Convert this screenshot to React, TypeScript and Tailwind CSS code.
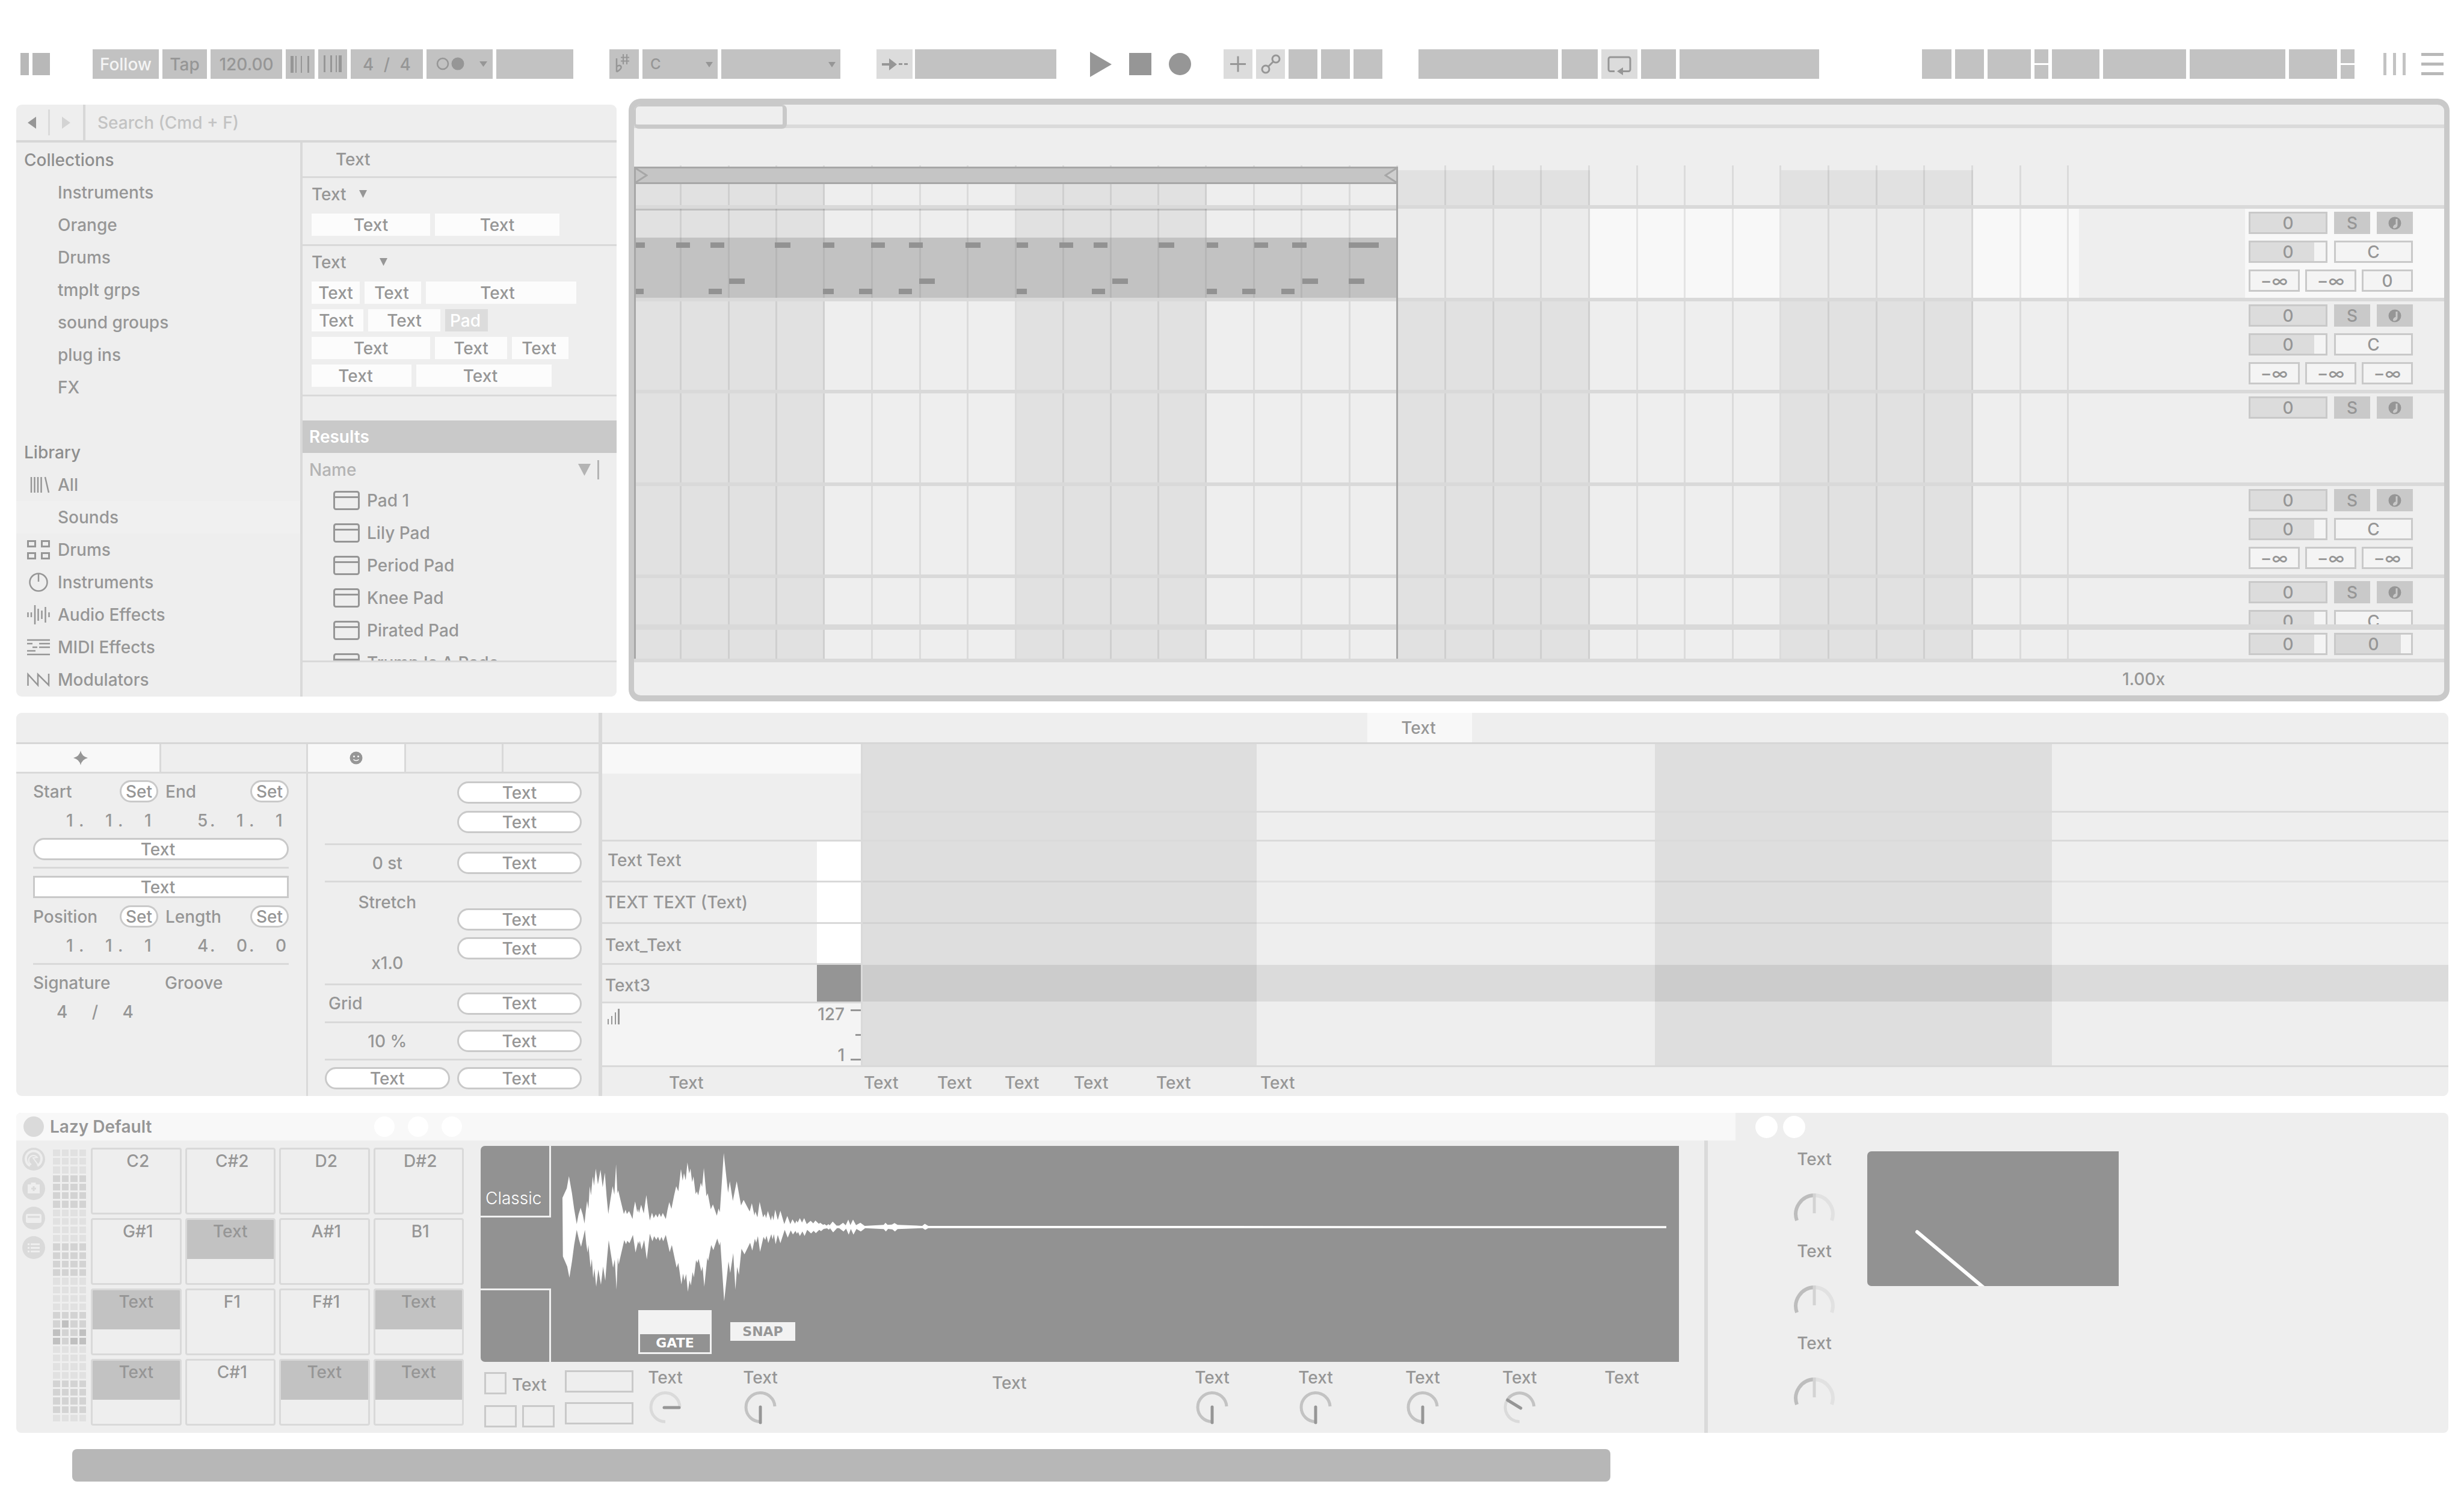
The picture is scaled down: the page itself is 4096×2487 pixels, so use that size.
import React from "react";

/* ------------------------------------------------------------------ */
/* Shared pieces                                                       */
/* ------------------------------------------------------------------ */

function Down({ className = "" }: { className?: string }) {
  return (
    <svg viewBox="0 0 14 12" preserveAspectRatio="none" className={className} aria-hidden="true">
      <path d="M0 0H14L7 12Z" fill="currentColor" />
    </svg>
  );
}

function Pill({ children, className = "" }: { children: React.ReactNode; className?: string }) {
  return (
    <button
      className={
        "flex h-[37px] items-center justify-center rounded-full border-[3px] border-[#c9c9c9] bg-white " + className
      }
    >
      {children}
    </button>
  );
}

/* ------------------------------------------------------------------ */
/* Toolbar                                                             */
/* ------------------------------------------------------------------ */

function Cell({
  w,
  light = false,
  label,
  children,
}: {
  w: string;
  light?: boolean;
  label: string;
  children?: React.ReactNode;
}) {
  return (
    <button
      aria-label={label}
      className={
        "flex h-[49px] shrink-0 items-center justify-center " + (light ? "bg-[#dcdcdc] " : "bg-[#c2c2c2] ") + w
      }
    >
      {children}
    </button>
  );
}

function SplitCell({ label }: { label: string }) {
  return (
    <div className="flex h-[49px] w-[23px] flex-col gap-[3px]">
      <button aria-label={label + " in"} className="flex-1 bg-[#c2c2c2]" />
      <button aria-label={label + " out"} className="flex-1 bg-[#c2c2c2]" />
    </div>
  );
}

function Toolbar() {
  return (
    <header className="flex h-[164px] items-start pt-[82px] pr-[34px] pl-[34px]">
      <button aria-label="Toggle browser" className="flex h-[49px] w-[49px] items-center gap-[6px]">
        <span className="h-[37px] w-[14px] bg-[#b8b8b8]" />
        <span className="h-[37px] w-[29px] bg-[#b8b8b8]" />
      </button>

      <div className="ml-[71px] flex gap-[6px]">
        <Cell w="w-[110px]" label="Follow">
          <span className="text-[#f4f4f4]">Follow</span>
        </Cell>
        <Cell w="w-[74px]" label="Tap tempo">
          Tap
        </Cell>
        <Cell w="w-[119px]" label="Tempo">
          120.00
        </Cell>
        <Cell w="w-[48px]" label="Nudge down">
          <svg viewBox="0 0 48 49" className="h-[49px] w-[48px]" fill="currentColor">
            <path d="M8 11h5v28H8zM16 11h2v28h-2zM25 11h2v28h-2zM36 11h3v28h-3z" />
          </svg>
        </Cell>
        <Cell w="w-[48px]" label="Nudge up">
          <svg viewBox="0 0 48 49" className="h-[49px] w-[48px]" fill="currentColor">
            <path d="M9 10h3v28H9zM20 10h3v28h-3zM29 10h2v28h-2zM34 10h5v28h-5z" />
          </svg>
        </Cell>
        <Cell w="w-[120px]" label="Time signature">
          <span className="flex w-[80px] justify-between">
            <span>4</span>
            <span>/</span>
            <span>4</span>
          </span>
        </Cell>
        <Cell w="w-[110px]" label="Metronome">
          <svg viewBox="0 0 110 49" className="h-[49px] w-[110px]">
            <circle cx="27" cy="24" r="9" fill="none" stroke="currentColor" strokeWidth="2.5" />
            <circle cx="52" cy="24" r="10.500" fill="currentColor" />
            <path d="M88 20h13l-6.500 9z" fill="currentColor" />
          </svg>
        </Cell>
        <Cell w="w-[128px]" label="Quantization" />
      </div>

      <div className="ml-[60px] flex gap-[6px]">
        <Cell w="w-[49px]" label="Scale mode">
          <svg viewBox="0 0 49 49" className="h-[49px] w-[49px]" fill="none" stroke="currentColor" strokeWidth="2.500">
            <path d="M12 15v22.500M12 29c4-4 8-2 7.500 1.500-0.500 3-4 5-7.500 7" />
            <path d="M23 8v17M29 8v17M19 13.500h14M19 19.500h14" strokeWidth="2" />
          </svg>
        </Cell>
        <div className="relative">
          <select
            aria-label="Root note"
            className="h-[49px] w-[125px] appearance-none bg-[#c2c2c2] pl-[13px] text-2xl"
          >
            <option>C</option>
          </select>
          <Down className="pointer-events-none absolute top-[21px] right-[8px] h-[9px] w-[12px]" />
        </div>
        <div className="relative">
          <select aria-label="Scale name" className="h-[49px] w-[198px] appearance-none bg-[#c2c2c2]">
            <option></option>
          </select>
          <Down className="pointer-events-none absolute top-[21px] right-[8px] h-[9px] w-[12px]" />
        </div>
      </div>

      <div className="ml-[60px] flex gap-[4px]">
        <Cell w="w-[60px]" light label="Arrangement follow">
          <svg viewBox="0 0 60 49" className="h-[49px] w-[60px]" fill="currentColor">
            <path d="M9 23h12v-8l13 10-13 10v-8H9zM37 23h6v3h-6zM46 23h6v3h-6z" />
          </svg>
        </Cell>
        <Cell w="w-[235px]" label="Position" />
      </div>

      <div className="ml-[56px] flex h-[49px] items-center gap-[29px]">
        <button aria-label="Play">
          <svg viewBox="0 0 36 42" className="h-[42px] w-[36px]">
            <path d="M0 0L36 21L0 42Z" fill="#969696" />
          </svg>
        </button>
        <button aria-label="Stop" className="h-[37px] w-[37px] bg-[#969696]" />
        <button aria-label="Record" className="h-[37px] w-[37px] rounded-full bg-[#969696]" />
      </div>

      <div className="ml-[54px] flex gap-[6px]">
        <Cell w="w-[48px]" light label="Overdub">
          <svg viewBox="0 0 48 49" className="h-[49px] w-[48px]" stroke="currentColor" strokeWidth="3">
            <path d="M11 24.500h26M24 11.500v26" />
          </svg>
        </Cell>
        <Cell w="w-[48px]" light label="Automation arm">
          <svg viewBox="0 0 48 49" className="h-[49px] w-[48px]" fill="none" stroke="currentColor" strokeWidth="3">
            <circle cx="33" cy="16" r="6" />
            <circle cx="16" cy="33" r="6" />
            <path d="M20.500 28.500L28.500 20.500" />
          </svg>
        </Cell>
        <Cell w="w-[48px]" label="Re-enable automation" />
        <Cell w="w-[48px]" label="Capture" />
        <Cell w="w-[48px]" label="Session record" />
      </div>

      <div className="ml-[60px] flex gap-[6px]">
        <Cell w="w-[232px]" label="Loop start" />
        <Cell w="w-[60px]" label="Punch in" />
        <Cell w="w-[60px]" light label="Loop">
          <svg viewBox="0 0 60 49" className="h-[49px] w-[60px]" fill="none" stroke="currentColor" strokeWidth="3">
            <path d="M22 36.500h-7a3 3 0 0 1-3-3V16a3 3 0 0 1 3-3h30a3 3 0 0 1 3 3v17.500a3 3 0 0 1-3 3h-10" />
            <path d="M36 30v13l-10-6.500z" fill="currentColor" stroke="none" />
          </svg>
        </Cell>
        <Cell w="w-[58px]" label="Punch out" />
        <Cell w="w-[232px]" label="Loop length" />
      </div>

      <div className="ml-auto flex gap-[6px]">
        <Cell w="w-[49px]" label="Draw mode" />
        <Cell w="w-[48px]" label="Computer keyboard" />
        <Cell w="w-[72px]" label="Key map" />
        <SplitCell label="Key" />
        <Cell w="w-[79px]" label="MIDI map" />
        <Cell w="w-[138px]" label="Sample rate" />
        <Cell w="w-[159px]" label="Audio engine" />
        <Cell w="w-[80px]" label="CPU" />
        <SplitCell label="MIDI" />
      </div>
      <button aria-label="Mixer" className="ml-[48px] flex h-[49px] w-[37px] items-center justify-between">
        <span className="h-[37px] w-[5px] bg-[#c3c3c3]" />
        <span className="h-[37px] w-[5px] bg-[#c3c3c3]" />
        <span className="h-[37px] w-[5px] bg-[#c3c3c3]" />
      </button>
      <button aria-label="Menu" className="ml-[26px] flex h-[49px] w-[37px] flex-col justify-between py-[6px]">
        <span className="h-[5px] w-full bg-[#b8b8b8]" />
        <span className="h-[5px] w-full bg-[#b8b8b8]" />
        <span className="h-[5px] w-full bg-[#b8b8b8]" />
      </button>
    </header>
  );
}

/* ------------------------------------------------------------------ */
/* Browser                                                             */
/* ------------------------------------------------------------------ */

const sideIcons: Record<string, React.ReactNode> = {
  All: <path d="M7 3v26M12.500 3v26M18 3v26M23.500 3v26M30 3l6 26" strokeWidth="2.500" />,
  Drums: (
    <path d="M1.500 1.500h12v9h-12zM24.500 1.500h12v9h-12zM1.500 21.500h12v9h-12zM24.500 21.500h12v9h-12z" strokeWidth="3" />
  ),
  Instruments: (
    <>
      <circle cx="19" cy="16" r="14.500" strokeWidth="2.500" />
      <path d="M19 2v13" strokeWidth="2.500" />
    </>
  ),
  "Audio Effects": (
    <path
      d="M1.500 12v8M7 12v8M13 0v32M18.500 6v20M24.500 9v14M30.500 3v26M36.500 12v8"
      strokeWidth="2.500"
    />
  ),
  "MIDI Effects": (
    <path d="M0 4h38M0 10h9M20 10h18M9 16h8M20 16h18M0 22h14M0 28h38" strokeWidth="2.500" />
  ),
  Modulators: <path d="M1.500 26V7L18 25V7L36 25V6" strokeWidth="2.500" />,
};

function SideRow({ label, icon }: { label: string; icon?: React.ReactNode }) {
  return (
    <li>
      <button
        className={
          "flex h-[54px] w-full items-center gap-[13px] pl-[18px] text-left " +
          (label === "Sounds" ? "bg-[#f0f0f0]" : "")
        }
      >
        <svg viewBox="0 0 38 32" className="h-[32px] w-[38px]" fill="none" stroke="currentColor">
          {icon}
        </svg>
        {label}
      </button>
    </li>
  );
}

function Tag({ w, on = false, children }: { w: string; on?: boolean; children: React.ReactNode }) {
  return (
    <button
      className={
        "flex h-[37px] items-center justify-center " + (on ? "bg-[#dcdcdc] text-white " : "bg-[#fcfcfc] ") + w
      }
    >
      {children}
    </button>
  );
}

const results = ["Pad 1", "Lily Pad", "Period Pad", "Knee Pad", "Pirated Pad", "Trump Is A Pado"];

function Browser() {
  return (
    <section aria-label="Browser" className="mt-[10px] flex w-[998px] shrink-0 flex-col overflow-hidden rounded-[9px] bg-[#eeeeee]">
      <div className="flex h-[63px] items-stretch border-b-4 border-[#d7d7d7]">
        <div className="flex w-[115px] items-center justify-between border-r-4 border-[#d7d7d7] py-[8px] pl-[19px]">
          <button aria-label="Back">
            <svg viewBox="0 0 14 20" className="h-[20px] w-[14px]">
              <path d="M14 0V20L0 10Z" fill="#969696" />
            </svg>
          </button>
          <span className="h-full w-[3px] bg-[#dadada]" />
          <button aria-label="Forward" className="mr-[21px]">
            <svg viewBox="0 0 14 20" className="h-[20px] w-[14px]">
              <path d="M0 0V20L14 10Z" fill="#d3d3d3" />
            </svg>
          </button>
        </div>
        <input
          aria-label="Search"
          placeholder="Search (Cmd + F)"
          className="flex-1 bg-transparent pl-[20px] placeholder:text-[#c3c3c3] placeholder:opacity-100"
        />
      </div>

      <div className="flex">
        <nav className="w-[472px] pt-[2px]">
          <h2 className="flex h-[54px] items-center pl-[13px] text-[#8e8e8e]">Collections</h2>
          <ul>
            {["Instruments", "Orange", "Drums", "tmplt grps", "sound groups", "plug ins", "FX"].map((n) => (
              <SideRow key={n} label={n} />
            ))}
          </ul>
          <h2 className="mt-[54px] flex h-[54px] items-center pl-[13px] text-[#8e8e8e]">Library</h2>
          <ul>
            {["All", "Sounds", "Drums", "Instruments", "Audio Effects", "MIDI Effects", "Modulators"].map((n) => (
              <SideRow key={n} label={n} icon={sideIcons[n]} />
            ))}
          </ul>
        </nav>

        <div className="flex flex-1 flex-col border-l-4 border-[#d9d9d9]">
          <div className="flex h-[59px] items-center border-b-[3px] border-[#d9d9d9] pl-[55px]">Text</div>
          <div className="h-[113px] border-b-[3px] border-[#d9d9d9] pt-[9px] pl-[15px]">
            <button className="flex h-9 items-center gap-[21px]">
              Text <Down className="mb-[2px] h-[13px] w-[13px]" />
            </button>
            <div className="mt-[14px] flex gap-[8px]">
              <Tag w="w-[197px]">Text</Tag>
              <Tag w="w-[207px]">Text</Tag>
            </div>
          </div>
          <div className="h-[250px] border-b-[3px] border-[#d9d9d9] pt-[9px] pl-[15px]">
            <button className="flex h-9 items-center gap-[55px]">
              Text <Down className="mb-[2px] h-[13px] w-[13px]" />
            </button>
            <div className="mt-[14px] flex flex-col gap-[9px]">
              <div className="flex gap-[8px]">
                <Tag w="w-[80px]">Text</Tag>
                <Tag w="w-[94px] pr-[4px]">Text</Tag>
                <Tag w="w-[250px] pr-[12px]">Text</Tag>
              </div>
              <div className="flex gap-[8px]">
                <Tag w="w-[86px] pr-[4px]">Text</Tag>
                <Tag w="w-[120px]">Text</Tag>
                <Tag w="w-[71px] pr-[4px]" on>
                  Pad
                </Tag>
              </div>
              <div className="flex gap-[8px]">
                <Tag w="w-[197px]">Text</Tag>
                <Tag w="w-[120px]">Text</Tag>
                <Tag w="w-[94px] pr-[4px]">Text</Tag>
              </div>
              <div className="flex gap-[8px]">
                <Tag w="w-[166px] pr-[20px]">Text</Tag>
                <Tag w="w-[225px] pr-[12px]">Text</Tag>
              </div>
            </div>
          </div>

          <h2 className="mt-[40px] flex h-[54px] items-center bg-[#c9c9c9] pl-[11px] font-semibold text-white">
            Results
          </h2>
          <div className="flex h-[52px] items-center pt-[3px] pr-[29px] pl-[11px] text-[#b4b4b4]">
            <span className="flex-1">Name</span>
            <Down className="h-[20px] w-[21px]" />
            <span className="ml-[11px] h-[32px] w-[3px] bg-[#b4b4b4]" />
          </div>
          <ul className="h-[293px] overflow-hidden">
            {results.map((r) => (
              <li key={r}>
                <button className="flex h-[54px] w-full items-center gap-[12px] pl-[51px] text-left">
                  <svg viewBox="0 0 44 32" className="h-[32px] w-[44px]" fill="none" stroke="currentColor" strokeWidth="3">
                    <rect x="1.500" y="1.500" width="41" height="29" rx="3" />
                    <path d="M1.500 10.500h41" />
                  </svg>
                  {r}
                </button>
              </li>
            ))}
          </ul>
          <div className="h-[60px] border-t-[3px] border-[#d9d9d9]" />
        </div>
      </div>
    </section>
  );
}

/* ------------------------------------------------------------------ */
/* Arrangement                                                         */
/* ------------------------------------------------------------------ */

type Bar = { w: string; dark: boolean };

const bars: Bar[] = [
  { w: "w-[317px]", dark: true },
  { w: "w-[319px]", dark: false },
  { w: "w-[316px]", dark: true },
  { w: "w-[318px]", dark: false },
  { w: "w-[319px]", dark: true },
  { w: "w-[318px]", dark: false },
  { w: "w-[319px]", dark: true },
];

function Beats({ className, n = 4 }: { className: string; n?: number }) {
  return (
    <div className={"flex " + className}>
      {Array.from({ length: n }, (_, i) => (
        <div key={i} className="flex-1 border-r-[3px] border-black/8" />
      ))}
    </div>
  );
}

const notesHigh = [
  [3, 15], [70, 23], [127, 23], [234, 26], [314, 19], [394, 23], [457, 23], [551, 25],
  [636, 19], [707, 23], [764, 23], [872, 26], [952, 19], [1031, 23], [1094, 24], [1188, 50],
];
const notesMid = [[158, 26], [474, 26], [795, 26], [1111, 26], [1188, 26]];
const notesLow = [
  [3, 13], [124, 22], [314, 18], [374, 22], [440, 22], [636, 17], [761, 22], [952, 17], [1011, 22], [1076, 22],
];

function Notes({ list, top }: { list: number[][]; top: string }) {
  return (
    <>
      {list.map(([x, w]) => (
        <span key={x} className={"absolute h-[9px] bg-[#929292] " + top} style={{ left: x, width: w }} />
      ))}
    </>
  );
}

function Sep({ h = "h-[6px]" }: { h?: string }) {
  return <div className={"relative z-20 bg-[#d9d9d9] " + h} />;
}

function Value({ children, fill, w = "w-[131px]" }: { children: React.ReactNode; fill?: string; w?: string }) {
  return (
    <button className={"relative flex h-[37px] items-center justify-center border-[3px] border-[#c9c9c9] bg-[#f4f4f4] " + w}>
      {fill && <span className={"absolute inset-y-0 left-0 " + fill} />}
      <span className="relative">{children}</span>
    </button>
  );
}

function Mixer({ third, rows = 3, lit = false }: { third?: string; rows?: number; lit?: boolean }) {
  return (
    <div className={"ml-auto flex w-[331px] flex-col gap-[11px] pt-[5px] pl-[6px] " + (lit ? "bg-[#f8f8f8]" : "")}>
      <div className="flex gap-[11px]">
        <Value fill="w-full bg-[#dcdcdc]">0</Value>
        <button className="h-[37px] w-[60px] bg-[#c9c9c9]">S</button>
        <button aria-label="Arm" className="flex h-[37px] w-[60px] items-center justify-center bg-[#c9c9c9]">
          <svg viewBox="0 0 22 22" className="h-[22px] w-[22px]">
            <circle cx="11" cy="11" r="10.500" fill="#969696" />
            <path d="M12.500 4h3v10.500c0 3-3 5-6.500 5-2.500-1.500 0-6 3.500-6.500z" fill="#c9c9c9" />
          </svg>
        </button>
      </div>
      {rows > 1 && (
        <div className="flex gap-[11px]">
          <Value fill="w-[106px] bg-[#dcdcdc]">0</Value>
          <Value>C</Value>
        </div>
      )}
      {rows > 2 && (
        <div className="flex gap-[9px]">
          <Value w="w-[85px]">−∞</Value>
          <Value w="w-[85px]">−∞</Value>
          <Value w="w-[85px]">{third}</Value>
        </div>
      )}
    </div>
  );
}

function Arrangement() {
  return (
    <section
      aria-label="Arrangement"
      className="min-w-0 flex-1 overflow-hidden rounded-[20px] border-x-[9px] border-y-[10px] border-[#c9c9c9] bg-[#eeeeee]"
    >
      <div className="flex h-[39px] border-b-[6px] border-[#dadada]">
        <button
          aria-label="Overview"
          className="h-[40px] w-[254px] shrink-0 rounded-[8px] border-t-[3px] border-r-[7px] border-b-[7px] border-l-[3px] border-[#c9c9c9] bg-[#eeeeee]"
        />
      </div>
      <div className="h-[62px]" />

      <div className="relative">
        <div className="pointer-events-none absolute inset-0 z-10 flex">
          {bars.map((b, i) => (
            <div key={i} className={"flex shrink-0 flex-col " + b.w}>
              <Beats className="h-[8px]" />
              <Beats className={"flex-1 " + (b.dark ? "bg-black/5" : "")} />
            </div>
          ))}
          <Beats className="w-[159px]" n={2} />
        </div>

        <div className="pointer-events-none absolute top-[2px] bottom-0 left-0 z-30 w-[1270px] border-x-[3px] border-[#a7a7a7]">
          <div className="flex h-[29px] items-center justify-between border-y-[3px] border-[#a7a7a7] bg-[#c5c5c5]">
            <svg viewBox="0 0 20 23" className="h-[23px] w-[20px]" fill="none" stroke="#a7a7a7" strokeWidth="3">
              <path d="M0 0L18 11.500L0 23" />
            </svg>
            <svg viewBox="0 0 20 23" className="h-[23px] w-[20px]" fill="#cfcfcf" stroke="#a7a7a7" strokeWidth="3">
              <path d="M20 0L2 11.500L20 23" />
            </svg>
          </div>
        </div>

        <div className="h-[66px]" />
        <Sep />
        <div className="flex h-[148px]">
          <div className="relative z-20 w-[1270px] border-t-[3px] border-black/15 pt-[45px]">
            <div className="relative flex h-[100px] bg-[#c2c2c2]">
              {bars.slice(0, 4).map((b, i) => (
                <Beats key={i} className={"opacity-75 " + b.w} />
              ))}
              <Notes list={notesHigh} top="top-[8px]" />
              <Notes list={notesMid} top="top-[68px]" />
              <Notes list={notesLow} top="top-[85px]" />
            </div>
          </div>
          <div className="w-[1132px] bg-[#f8f8f8]" />
          <Mixer third="0" lit />
        </div>
        <Sep />
        <div className="flex h-[147px]">
          <Mixer third="−∞" />
        </div>
        <Sep />
        <div className="flex h-[148px]">
          <Mixer rows={1} />
        </div>
        <Sep />
        <div className="flex h-[147px]">
          <Mixer third="−∞" />
        </div>
        <Sep />
        <div className="flex h-[77px] overflow-hidden">
          <Mixer rows={2} />
        </div>
        <Sep h="h-[9px]" />
        <div className="flex h-[48px]">
          <div className="ml-auto flex w-[331px] gap-[11px] pt-[5px] pl-[6px]">
            <Value fill="w-[106px] bg-[#dcdcdc]">0</Value>
            <Value fill="w-[108px] bg-[#d7d7d7]">0</Value>
          </div>
        </div>
      </div>
      <div className="flex h-[61px] items-center justify-end border-t-[6px] border-[#d9d9d9] pt-px pr-[464px]">1.00x</div>
    </section>
  );
}

/* ------------------------------------------------------------------ */
/* Clip view                                                           */
/* ------------------------------------------------------------------ */

function Position({ v }: { v: string[] }) {
  return (
    <div className="flex w-[148px] justify-between">
      {v.map((d, i) => (
        <span key={i} className={"flex " + (i < 2 ? "w-[65px]" : "w-[18px]")}>
          <span className="w-[21px]">{d}</span>
          {i < 2 && <span>.</span>}
        </span>
      ))}
    </div>
  );
}

function LabelSet({ a, b }: { a: string; b: string }) {
  return (
    <div className="flex h-[37px] items-center justify-between">
      <div className="flex w-[208px] items-center justify-between">
        {a}
        <Pill className="w-[64px]">Set</Pill>
      </div>
      <div className="flex w-[205px] items-center justify-between">
        {b}
        <Pill className="w-[64px]">Set</Pill>
      </div>
    </div>
  );
}

function Rule() {
  return <div className="h-[3px] bg-[#d9d9d9]" />;
}

function ClipSettings() {
  return (
    <div className="flex w-[968px] shrink-0 flex-col">
      <div className="h-[52px] border-b-[3px] border-[#d7d7d7]" />
      <div className="flex flex-1">
        <div className="flex w-[485px] flex-col border-r-[3px] border-[#d9d9d9]">
          <div className="flex h-[49px] border-b-[3px] border-[#d9d9d9]">
            <button aria-label="Clip" className="flex w-[241px] items-center justify-center border-r-[3px] border-[#d9d9d9] bg-[#f8f8f8] pr-[24px]">
              <svg viewBox="0 0 24 24" className="h-[24px] w-[24px]">
                <path d="M12 0Q14 9.500 24 12Q14 14.500 12 24Q10 14.500 0 12Q10 9.500 12 0Z" fill="#969696" />
              </svg>
            </button>
            <button aria-label="Clip groove" className="flex-1" />
          </div>
          <div className="pt-[11px] pr-[29px] pl-[28px]">
            <LabelSet a="Start" b="End" />
            <div className="flex h-[59px] items-center justify-end gap-[70px] pr-[4px]">
              <Position v={["1", "1", "1"]} />
              <Position v={["5", "1", "1"]} />
            </div>
            <Pill className="w-full pr-[10px]">Text</Pill>
            <div className="mt-[11px]">
              <Rule />
            </div>
            <button className="mt-[12px] flex h-[37px] w-full items-center justify-center border-[3px] border-[#c9c9c9] bg-white pr-[10px]">
              Text
            </button>
            <div className="mt-[12px]">
              <LabelSet a="Position" b="Length" />
            </div>
            <div className="flex h-[59px] items-center justify-end gap-[70px] pr-[4px]">
              <Position v={["1", "1", "1"]} />
              <Position v={["4", "0", "0"]} />
            </div>
            <Rule />
            <div className="flex h-[60px] items-center">
              <span className="w-[219px]">Signature</span>
              <span>Groove</span>
            </div>
            <div className="ml-[39px] flex h-9 w-[128px] items-center justify-between">
              <span>4</span>
              <span>/</span>
              <span>4</span>
            </div>
          </div>
        </div>

        <div className="flex flex-1 flex-col">
          <div className="flex h-[49px] border-b-[3px] border-[#d9d9d9]">
            <button aria-label="Sample" className="flex w-[163px] items-center justify-center border-r-[3px] border-[#d9d9d9] bg-[#f8f8f8]">
              <svg viewBox="0 0 22 22" className="h-[22px] w-[22px]">
                <circle cx="11" cy="11" r="10.500" fill="#969696" />
                <circle cx="7.500" cy="8.500" r="1.500" fill="#f8f8f8" />
                <circle cx="14.500" cy="8.500" r="1.500" fill="#f8f8f8" />
                <path d="M6.500 13.500q4.500 4 9 0" fill="none" stroke="#f8f8f8" strokeWidth="1.500" />
              </svg>
            </button>
            <button aria-label="Envelopes" className="w-[162px] border-r-[3px] border-[#d9d9d9]" />
            <button aria-label="Expression" className="flex-1" />
          </div>
          <div className="px-[28px]">
            <div className="flex h-[116px] flex-col items-end gap-[12px] pt-[13px]">
              <Pill className="w-[207px]">Text</Pill>
              <Pill className="w-[207px]">Text</Pill>
            </div>
            <Rule />
            <div className="grid h-[59px] grid-cols-2 items-center gap-[12px]">
              <span className="text-center">0 st</span>
              <Pill>Text</Pill>
            </div>
            <Rule />
            <div className="grid h-[168px] grid-cols-2 gap-[12px]">
              <div className="flex flex-col items-center justify-between pt-[15px] pb-[16px]">
                <span>Stretch</span>
                <span>x1.0</span>
              </div>
              <div className="flex flex-col gap-[11px] pt-[43px]">
                <Pill>Text</Pill>
                <Pill>Text</Pill>
              </div>
            </div>
            <Rule />
            <div className="grid h-[60px] grid-cols-2 items-center gap-[12px]">
              <span className="pl-[6px]">Grid</span>
              <Pill>Text</Pill>
            </div>
            <Rule />
            <div className="grid h-[59px] grid-cols-2 items-center gap-[12px]">
              <span className="text-center">10 %</span>
              <Pill>Text</Pill>
            </div>
            <Rule />
            <div className="grid h-[59px] grid-cols-2 items-center gap-[12px]">
              <Pill>Text</Pill>
              <Pill>Text</Pill>
            </div>
          </div>
        </div>
      </div>
    </div>
  );
}

function KeyRow({ label, h, dark = false, pad }: { label: string; h: string; dark?: boolean; pad: string }) {
  return (
    <div className={"flex items-center justify-between " + h}>
      <span className={pad}>{label}</span>
      <button aria-label={"Play " + label} className={"h-full w-[73px] " + (dark ? "bg-[#959595]" : "bg-white")} />
    </div>
  );
}

function NoteEditor() {
  return (
    <div className="flex min-w-0 flex-1 flex-col border-l-[6px] border-[#d9d9d9]">
      <div className="flex h-[52px] border-b-[3px] border-[#d7d7d7] pl-[1272px]">
        <button className="w-[174px] bg-[#f8f8f8] pr-[4px]">Text</button>
      </div>
      <div className="flex">
        <div className="w-[430px] shrink-0">
          <div className="h-[49px] bg-[#f8f8f8]" />
          <div className="h-[110px]" />
          <Rule />
          <KeyRow label="Text Text" h="h-[65px]" pad="pb-[4px] pl-[9px]" />
          <Rule />
          <KeyRow label="TEXT TEXT (Text)" h="h-[66px]" pad="pl-[5px]" />
          <Rule />
          <KeyRow label="Text_Text" h="h-[65px]" pad="pt-[4px] pl-[5px]" />
          <Rule />
          <KeyRow label="Text3" h="h-[61px]" pad="pt-[6px] pl-[5px]" dark />
          <Rule />
          <div className="flex h-[103px] justify-between bg-[#f4f4f4]">
            <svg viewBox="0 0 22 26" className="mt-[9px] ml-[8px] h-[26px] w-[22px]" fill="currentColor">
              <path d="M1 17h2v9H1zM7 12h2v14H7zM13 6h2v20h-2zM18 0h3v26h-3z" />
            </svg>
            <div className="flex gap-[10px]">
              <div className="flex flex-col justify-between pt-[1px] text-right leading-[34px]">
                <span>127</span>
                <span>1</span>
              </div>
              <div className="flex w-[17px] flex-col items-end justify-between pt-[10px] pb-[8px]">
                <span className="h-[3px] w-[17px] bg-[#969696]" />
                <span className="h-[3px] w-[9px] bg-[#969696]" />
                <span className="h-[3px] w-[17px] bg-[#969696]" />
              </div>
            </div>
          </div>
        </div>
        <div className="relative flex flex-1 flex-col border-l-[3px] border-[#dadada]">
          <div className="absolute inset-0 flex">
            <div className="w-[655px] bg-[#dedede]" />
            <div className="w-[662px]" />
            <div className="w-[660px] bg-[#dedede]" />
          </div>
          <div className="h-[111px]" />
          <div className="relative h-[3px] bg-[#dadada]" />
          <div className="h-[45px]" />
          <div className="relative h-[3px] bg-[#dadada]" />
          <div className="h-[65px]" />
          <div className="relative h-[3px] bg-black/5" />
          <div className="h-[66px]" />
          <div className="relative h-[3px] bg-black/5" />
          <div className="h-[68px]" />
          <div className="relative h-[61px] bg-black/8" />
        </div>
      </div>
      <div className="flex h-[51px] items-center border-t-[3px] border-[#d9d9d9] pt-[3px] pl-[111px]">
        <span className="w-[324px]">Text</span>
        <span className="w-[122px]">Text</span>
        <span className="w-[112px]">Text</span>
        <span className="w-[115px]">Text</span>
        <span className="w-[137px]">Text</span>
        <span className="w-[173px]">Text</span>
        <span>Text</span>
      </div>
    </div>
  );
}

/* ------------------------------------------------------------------ */
/* Device view                                                         */
/* ------------------------------------------------------------------ */

const padRows = [
  ["C2", "C#2", "D2", "D#2"],
  ["G#1", "Text", "A#1", "B1"],
  ["Text", "F1", "F#1", "Text"],
  ["Text", "C#1", "Text", "Text"],
];

const activeCells = new Set([81, 84, 87, 88, 90, 91]);

function cellShade(i: number) {
  if (activeCells.has(i)) return "bg-[#c0c0c0]";
  const row = Math.floor(i / 4);
  return Math.floor((row + 1) / 4) % 2 === 1 && row < 31 ? "bg-[#d3d3d3]" : "bg-[#e1e1e1]";
}

const waveTop =
  "216,388 226,350 231,302 238,370 243,432 249,492 253,455 258,427 263,455 267,490 270,440 273,400 276,432 279,342 282,378 286,303 289,340 293,272 298,335 304,277 309,346 314,288 318,380 322,452 327,395 332,342 336,375 340,255 343,370 345,358 350,395 358,452 362,435 365,452 370,440 374,455 378,472 381,430 384,402 389,445 391,432 393,448 398,415 404,450 410,377 414,430 418,478 423,447 427,468 432,453 436,466 440,449 444,464 448,448 455,472 459,435 463,405 468,432 474,380 479,342 484,362 490,274 494,320 497,290 501,318 505,248 509,292 512,272 516,326 519,303 524,373 527,362 530,378 536,328 539,345 543,270 549,382 552,370 559,433 564,414 573,459 577,430 580,445 589,210 599,368 603,322 610,400 619,322 629,418 635,396 649,442 654,409 660,458 662,442 667,465 672,404 680,465 684,452 687,468 691,440 698,478 701,457 704,477 708,435 714,476 720,439 729,492 736,460 743,492 748,473 754,490 757,478 760,486 765,468 770,486 775,468 781,492 790,479 796,489 801,478 809,491 812,487 819,495 822,492 827,498 831,492 834,497 841,482 850,498 856,498 865,487 871,497 877,474 882,496 888,474 895,496 905,487 915,499 959,495 963,487 968,495 978,494 984,488 991,495 1048,499 1054,491 1062,499 2769,500";
const waveBottom =
  "217,620 227,660 232,704 238,640 243,575 249,515 254,552 259,582 264,545 268,515 271,570 274,605 276,575 281,665 284,630 287,706 290,668 294,740 299,672 305,732 310,660 315,716 319,630 323,556 333,665 337,632 341,752 344,625 346,652 359,555 363,572 366,558 371,568 379,535 385,605 391,560 393,572 395,558 399,593 405,555 411,632 418,530 424,560 428,540 433,554 437,542 441,559 445,543 449,560 455,535 464,603 469,575 480,665 484,646 491,731 495,688 498,716 502,690 506,760 510,715 513,735 517,682 520,703 525,635 528,646 531,630 537,680 540,660 544,740 551,625 553,638 560,575 565,595 574,549 579,577 581,562 590,798 600,640 604,686 611,607 616,752 620,662 624,693 630,590 637,612 650,566 655,597 661,550 664,566 668,540 673,602 681,543 685,555 688,538 692,567 699,532 702,552 705,532 709,572 714,535 720,568 730,515 737,546 744,517 749,533 755,519 758,530 761,523 765,539 771,521 776,539 782,515 791,529 797,519 802,528 810,515 814,520 820,511 828,509 832,514 835,509 842,525 851,508 856,508 866,521 872,510 878,534 883,511 889,534 896,511 906,521 916,508 959,512 964,521 969,511 979,513 985,521 991,512 1049,508 1055,515 1062,508 2769,508";
const wavePoints = waveTop + " " + waveBottom.split(" ").reverse().join(" ");

type KnobKind = "off" | "full" | "part";

function Knob({ kind }: { kind: KnobKind }) {
  return (
    <svg viewBox="0 0 56 56" className="h-[56px] w-[56px]" fill="none" strokeWidth="5">
      {kind === "off" && (
        <>
          <path d="M28 51.500A24 24 0 1 1 52 27" stroke="#dadada" />
          <path d="M26 28H51" stroke="#969696" strokeLinecap="round" />
        </>
      )}
      {kind === "full" && (
        <>
          <path d="M28 51.500A24 24 0 1 1 52 26" stroke="#c3c3c3" />
          <path d="M28 27V53" stroke="#969696" strokeLinecap="round" />
        </>
      )}
      {kind === "part" && (
        <>
          <path d="M28 51.500A24 24 0 0 1 7.600 15.300" stroke="#dadada" />
          <path d="M7.600 15.300A24 24 0 0 1 52 26" stroke="#c3c3c3" />
          <path d="M30 29L8 15.500" stroke="#969696" strokeLinecap="round" />
        </>
      )}
    </svg>
  );
}

function Param({ kind, className }: { kind?: KnobKind; className: string }) {
  return (
    <div className={"flex w-[58px] flex-col items-center gap-[4px] pt-[8px] " + className}>
      <span>Text</span>
      {kind && (
        <button aria-label="Parameter">
          <Knob kind={kind} />
        </button>
      )}
    </div>
  );
}

function BigKnob() {
  return (
    <div className="flex h-[153px] flex-col items-center">
      <span>Text</span>
      <button aria-label="Amount" className="mt-[35px]">
        <svg viewBox="0 0 72 52" className="h-[52px] w-[72px]" fill="none">
          <path d="M7 49A31.500 31.500 0 0 1 36 7" stroke="#bdbdbd" strokeWidth="6" />
          <path d="M36 7A31.500 31.500 0 0 1 65 49" stroke="#e1e1e1" strokeWidth="6" />
          <path d="M36 4V37" stroke="#d3d3d3" strokeWidth="5" />
        </svg>
      </button>
    </div>
  );
}

function RoundButton({ label, children }: { label: string; children: React.ReactNode }) {
  return (
    <button aria-label={label}>
      <svg viewBox="0 0 38 38" className="h-[38px] w-[38px]">
        <circle cx="19" cy="19" r="19" fill="#dadada" />
        {children}
      </svg>
    </button>
  );
}

function Pads() {
  return (
    <div className="grid w-[620px] grid-cols-4 gap-[6px]">
      {padRows.flat().map((p, i) => (
        <button
          key={i}
          className="flex h-[111px] flex-col overflow-hidden rounded-[4px] border-[3px] border-[#d9d9d9]"
        >
          <span
            className={
              "block w-full pt-px text-center " + (p === "Text" ? "h-[65px] bg-[#c2c2c2]" : "pl-[6px]")
            }
          >
            {p}
          </span>
        </button>
      ))}
    </div>
  );
}

function Devices() {
  return (
    <section aria-label="Devices" className="mt-[28px] flex h-[532px] overflow-hidden rounded-[8px] bg-[#eeeeee]">
      <div className="flex w-[2812px] shrink-0 flex-col">
        <div className="mr-[-46px] flex h-[46px] items-center bg-[#f8f8f8] pl-[12px]">
          <button aria-label="Device on" className="h-[34px] w-[34px] rounded-full bg-[#dadada]" />
          <h2 className="ml-[10px] w-[539px] font-semibold">Lazy Default</h2>
          <div className="flex gap-[22px]">
            <button aria-label="Hot swap" className="h-[34px] w-[34px] rounded-full bg-white" />
            <button aria-label="Save" className="h-[34px] w-[34px] rounded-full bg-white" />
            <button aria-label="More" className="h-[34px] w-[34px] rounded-full bg-white" />
          </div>
        </div>
        <div className="flex flex-1 border-r-[6px] border-[#dadada]">
          <div className="flex w-[61px] flex-col gap-[11px] pt-[12px] pl-[10px]">
            <RoundButton label="Macros">
              <path d="M13 30A13 13 0 1 1 25 30" fill="none" stroke="#eeeeee" strokeWidth="4" />
              <path d="M15 28A8 8 0 1 1 25 16L18 17L26 28" fill="none" stroke="#eeeeee" strokeWidth="2" />
            </RoundButton>
            <RoundButton label="Sends">
              <path d="M9 12h5.500V9h8v3H29v15H9z" fill="#eeeeee" />
              <path d="M19 15v8M15 19h8" stroke="#dadada" strokeWidth="3" />
            </RoundButton>
            <RoundButton label="Devices">
              <rect x="6" y="12" width="26" height="15" rx="3" fill="#eeeeee" />
              <path d="M9 17h20" stroke="#dadada" strokeWidth="3" />
            </RoundButton>
            <RoundButton label="Chains">
              <path d="M9 13.500h3M14 13.500h15M9 19.500h3M14 19.500h15M9 25.500h3M14 25.500h15" stroke="#eeeeee" strokeWidth="3" />
            </RoundButton>
          </div>
          <div className="mt-[15px] grid h-[452px] w-[55px] grid-cols-4 gap-[3px]">
            {Array.from({ length: 128 }, (_, i) => (
              <span key={i} className={cellShade(i)} />
            ))}
          </div>
          <div className="mt-[12px] ml-[8px]">
            <Pads />
          </div>

          <div className="mt-[9px] ml-[28px]">
            <div className="flex h-[359px] w-[1992px] overflow-hidden rounded-l-[7px] bg-[#929292]">
              <div className="flex w-[117px] shrink-0 flex-col justify-between">
                <button className="flex h-[119px] items-end border-r-[3px] border-b-[3px] border-[#f0f0f0] pb-[11px] pl-[8px] font-light text-white">
                  Classic
                </button>
                <button aria-label="Slicing" className="h-[122px] border-t-[3px] border-r-[3px] border-[#f0f0f0]" />
              </div>
              <div className="pt-[10px] pl-[19px]">
                <svg viewBox="216 206 2553 596" preserveAspectRatio="none" className="h-[250px] w-[1835px]">
                  <polygon points={wavePoints} fill="#ffffff" />
                </svg>
                <div className="mt-[13px] ml-[126px] flex items-center gap-[31px]">
                  <button className="flex h-[73px] w-[122px] items-end justify-center border-[3px] border-t-[40px] border-[#f2f2f2] font-['DejaVu_Sans'] text-[22px] leading-[30px] font-bold text-white">
                    GATE
                  </button>
                  <button className="-mt-[3px] h-[31px] w-[108px] bg-[#f2f2f2] font-['DejaVu_Sans'] text-[22px] leading-[31px] font-bold">
                    SNAP
                  </button>
                </div>
              </div>
            </div>

            <div className="flex">
              <div className="flex flex-col gap-[16px] pt-[14px] pl-[6px]">
                <div className="flex items-center gap-[9px]">
                  <button aria-label="Option" className="h-[37px] w-[37px] border-[3px] border-[#c9c9c9]" />
                  <span className="w-[70px] pt-[6px]">Text</span>
                </div>
                <div className="flex gap-[9px]">
                  <button aria-label="Option A" className="h-[37px] w-[54px] border-[3px] border-[#c9c9c9]" />
                  <button aria-label="Option B" className="h-[37px] w-[54px] border-[3px] border-[#c9c9c9]" />
                </div>
              </div>
              <div className="ml-[17px] flex flex-col gap-[16px] pt-[14px]">
                <button aria-label="Field A" className="h-[37px] w-[114px] border-[3px] border-[#c9c9c9]" />
                <button aria-label="Field B" className="h-[37px] w-[114px] border-[3px] border-[#c9c9c9]" />
              </div>
              <Param kind="off" className="ml-[24px]" />
              <Param kind="full" className="ml-[100px]" />
              <span className="ml-[356px] w-[58px] pt-[17px]">Text</span>
              <Param kind="full" className="ml-[279px]" />
              <Param kind="full" className="ml-[114px]" />
              <Param kind="full" className="ml-[120px]" />
              <Param kind="part" className="ml-[103px]" />
              <Param className="ml-[112px]" />
            </div>
          </div>
        </div>
      </div>

      <div className="flex-1">
        <div className="flex h-[46px] items-center gap-[9px] pl-[79px]">
          <button aria-label="Reload" className="h-[37px] w-[37px] rounded-full bg-white" />
          <button aria-label="Store" className="h-[37px] w-[37px] rounded-full bg-white" />
        </div>
        <div className="flex pl-[141px]">
          <div className="pt-[13px]">
            <BigKnob />
            <BigKnob />
            <BigKnob />
          </div>
          <svg viewBox="0 0 418 224" className="mt-[18px] ml-[52px] h-[224px] w-[418px] rounded-l-[7px] bg-[#929292]">
            <path d="M83 134L194 227" stroke="#ffffff" strokeWidth="6" strokeLinecap="round" />
          </svg>
        </div>
      </div>
    </section>
  );
}

export default function App() {
  return (
    <div className="min-h-screen bg-white font-['Inter',sans-serif] text-[28px] leading-9 font-medium text-[#969696]">
      <Toolbar />
      <main className="pr-[24px] pl-[27px]">
        <div className="flex items-start gap-[20px]">
          <Browser />
          <Arrangement />
        </div>
        <div className="pr-[2px]">
          <section aria-label="Clip" className="mt-[19px] flex overflow-hidden rounded-[9px] bg-[#eeeeee]">
            <ClipSettings />
            <NoteEditor />
          </section>
          <Devices />
        </div>
        <div className="mt-[27px] ml-[93px] h-[54px] w-[2557px] rounded-[8px] bg-[#b7b7b7]" />
      </main>
    </div>
  );
}
